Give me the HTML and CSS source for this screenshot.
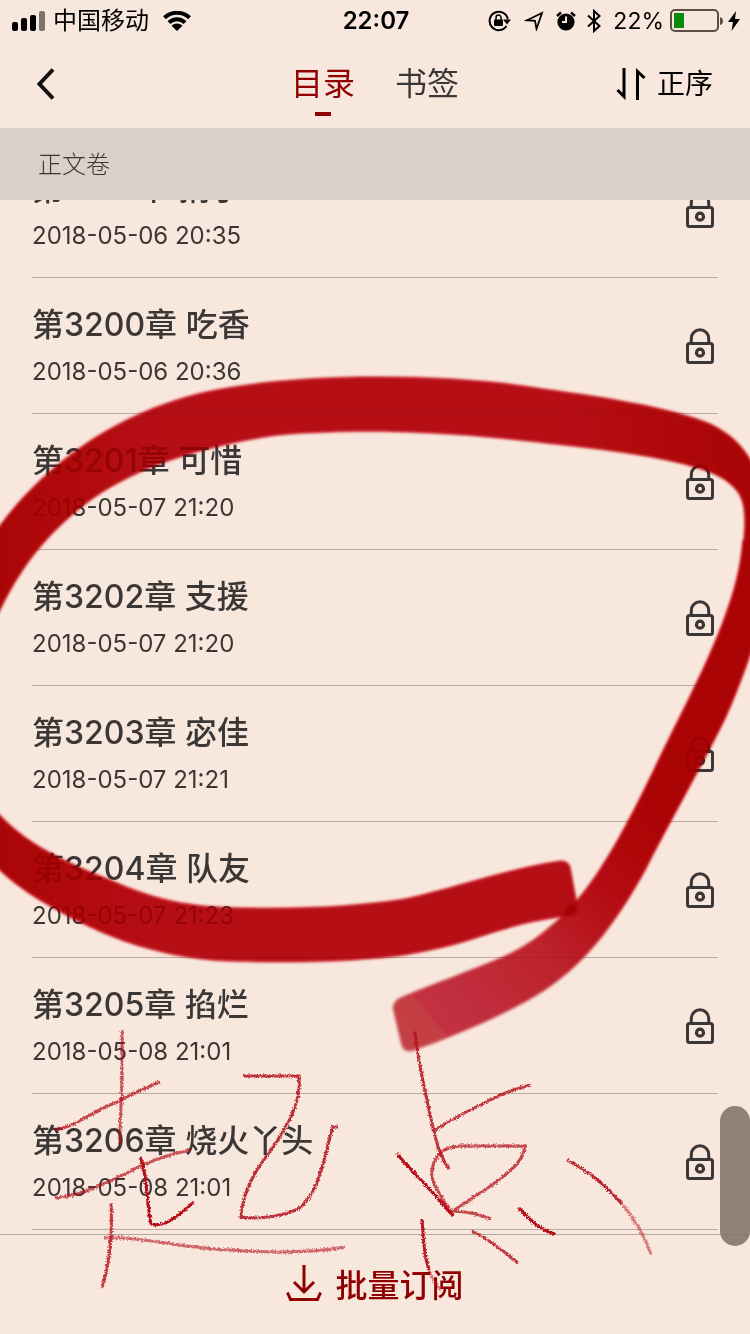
FILE: index.html
```html
<!DOCTYPE html>
<html lang="zh-CN">
<head>
    <meta charset="UTF-8">
    <meta name="viewport" content="width=device-width, initial-scale=1.0">
    <title>目录</title>
    <link rel="stylesheet" href="styles.css">
</head>
<body>
    <svg class="defs" aria-hidden="true">
        <symbol id="lock" viewBox="0 0 28 36">
            <path d="M5.3 15v-4.500a8.700 8.700 0 0 1 17.400 0V15" fill="none" stroke="currentColor" stroke-width="3"/>
            <rect x="1.500" y="15.500" width="25" height="19" rx="2" fill="none" stroke="currentColor" stroke-width="3"/>
            <circle cx="14" cy="24.700" r="3.500" fill="none" stroke="currentColor" stroke-width="3.200"/>
        </symbol>
    </svg>

    <div class="status">
        <div class="status-left">
            <svg width="34" height="20" viewBox="0 0 34 20">
                <rect x="0" y="11" width="6" height="9" rx="2"/>
                <rect x="9" y="7" width="6" height="13" rx="2"/>
                <rect x="18" y="4" width="6" height="16" rx="2"/>
                <rect x="27" y="0" width="6" height="20" rx="2" opacity="0.5"/>
            </svg>
            <span class="carrier">中国移动</span>
            <svg width="28" height="20" viewBox="0 0 28 20">
                <path d="M1.500 6.800a18 18 0 0 1 25 0M6 11.600a11.500 11.500 0 0 1 16 0" fill="none" stroke="#000" stroke-width="4"/>
                <path d="M14 20l-5.500-5.300a8 8 0 0 1 11 0z"/>
            </svg>
        </div>
        <span class="time">22:07</span>
        <div class="status-right">
            <svg width="24" height="22" viewBox="0 0 24 22">
                <path d="M18.500 16a9.200 9.200 0 1 1 1.300-7" fill="none" stroke="#000" stroke-width="2"/>
                <path d="M15 9.500h8l-4 5z"/>
                <rect x="6" y="9.500" width="9" height="6.500" rx="1"/>
                <path d="M8 10V7.500a2.500 2.500 0 0 1 5 0V10" fill="none" stroke="#000" stroke-width="1.500"/>
            </svg>
            <svg class="location" width="20" height="20" viewBox="0 0 20 20">
                <path d="M18 2L3 9.200l8 .600 1.500 8z" fill="none" stroke="#000" stroke-width="1.800"/>
            </svg>
            <svg class="alarm" width="20" height="20" viewBox="0 0 20 20">
                <circle cx="10" cy="11" r="8.600"/>
                <path d="M1 5l4-3.500M19 5l-4-3.500" stroke="#000" stroke-width="2.500"/>
                <path d="M10 5.500V11H6" fill="none" stroke="#f8e7dc" stroke-width="2"/>
            </svg>
            <svg class="bluetooth" width="14" height="24" viewBox="0 0 14 24">
                <path d="M1 6.500l11.500 10.500L7 22V2l5.500 5L1 17.500" fill="none" stroke="#000" stroke-width="2"/>
            </svg>
            <span class="percent">22%</span>
            <svg width="54" height="24" viewBox="0 0 54 24">
                <rect x="1" y="1" width="47" height="21" rx="4" fill="none" stroke="#5c4c46" stroke-width="2"/>
                <path d="M50 8q3 1 3 4t-3 4z" fill="#5c4c46"/>
                <rect x="4" y="4" width="10" height="15" fill="#0a8a0a"/>
            </svg>
            <svg class="bolt" width="12" height="20" viewBox="0 0 12 20">
                <path d="M8 0L0 11h5L3.500 20 12 8H7z"/>
            </svg>
        </div>
    </div>

    <header class="nav">
        <button class="back" aria-label="返回">
            <svg width="18" height="32" viewBox="0 0 18 32">
                <path d="M16 1.500L2.500 16 16 30.500" fill="none" stroke="#111" stroke-width="4"/>
            </svg>
        </button>
        <div class="tabs">
            <button class="tab active">目录</button>
            <button class="tab">书签</button>
        </div>
        <button class="sort">
            <svg width="30" height="32" viewBox="0 0 30 32">
                <path d="M8 0v28.500L1.500 22M21.500 32V3.500L28.500 10" fill="none" stroke="#000" stroke-width="3"/>
            </svg>
            正序
        </button>
    </header>

    <h2 class="volume">正文卷</h2>

    <ul class="chapters">
        <li><a href="#"><span class="info"><span class="title">第3199章 捎了</span><span class="date">2018-05-06 20:35</span></span><svg class="lock"><use href="#lock"/></svg></a></li>
        <li><a href="#"><span class="info"><span class="title">第3200章 吃香</span><span class="date">2018-05-06 20:36</span></span><svg class="lock"><use href="#lock"/></svg></a></li>
        <li><a href="#"><span class="info"><span class="title">第3201章 可惜</span><span class="date">2018-05-07 21:20</span></span><svg class="lock"><use href="#lock"/></svg></a></li>
        <li><a href="#"><span class="info"><span class="title">第3202章 支援</span><span class="date">2018-05-07 21:20</span></span><svg class="lock"><use href="#lock"/></svg></a></li>
        <li><a href="#"><span class="info"><span class="title">第3203章 宓佳</span><span class="date">2018-05-07 21:21</span></span><svg class="lock"><use href="#lock"/></svg></a></li>
        <li><a href="#"><span class="info"><span class="title">第3204章 队友</span><span class="date">2018-05-07 21:23</span></span><svg class="lock"><use href="#lock"/></svg></a></li>
        <li><a href="#"><span class="info"><span class="title">第3205章 掐烂</span><span class="date">2018-05-08 21:01</span></span><svg class="lock"><use href="#lock"/></svg></a></li>
        <li><a href="#"><span class="info"><span class="title">第3206章 烧火丫头</span><span class="date">2018-05-08 21:01</span></span><svg class="lock"><use href="#lock"/></svg></a></li>
    </ul>

    <footer class="footer">
        <button class="subscribe">
            <svg width="36" height="36" viewBox="0 0 36 36">
                <path d="M18 0v27M8 17l10 10 10-10M1.500 27.500l3 7h27l3-7" fill="none" stroke="#900000" stroke-width="3"/>
            </svg>
            批量订阅
        </button>
    </footer>

    <div class="thumb"></div>

    <!-- marker: a translucent coat, then a second coat that darkens what lies below -->
    <svg class="marks" viewBox="0 0 750 1334" preserveAspectRatio="none" aria-hidden="true">
        <defs>
            <linearGradient id="loop" gradientUnits="userSpaceOnUse" x1="0" y1="0" x2="750" y2="0">
                <stop offset="0" stop-color="#b00000" stop-opacity="0.92"/>
                <stop offset="0.2" stop-color="#b4000a" stop-opacity="0.8"/>
                <stop offset="0.75" stop-color="#b4000a" stop-opacity="0.8"/>
                <stop offset="0.98" stop-color="#b00000" stop-opacity="0.93"/>
            </linearGradient>
            <linearGradient id="tail" gradientUnits="userSpaceOnUse" x1="660" y1="800" x2="400" y2="1030">
                <stop offset="0" stop-color="#b00000" stop-opacity="0.93"/>
                <stop offset="0.25" stop-color="#b4000a" stop-opacity="0.85"/>
                <stop offset="0.5" stop-color="#b80010" stop-opacity="0.8"/>
                <stop offset="1" stop-color="#b80a1c" stop-opacity="0.76"/>
            </linearGradient>
            <linearGradient id="tail-shade" gradientUnits="userSpaceOnUse" x1="660" y1="800" x2="400" y2="1030">
                <stop offset="0" stop-color="#f0304a"/>
                <stop offset="0.25" stop-color="#f04058"/>
                <stop offset="0.55" stop-color="#f4c0c8"/>
                <stop offset="1" stop-color="#fcf4f4"/>
            </linearGradient>
            <path id="loop-top" d="M-10 540C30 480 95 425 180 399C270 371 440 373 530 387C600 397 670 407 710 424C735 436 748 452 760 478V540H744C746 515 745 502 738 492C728 478 712 472 695 467C640 451 560 445 500 438C420 430 330 429 270 436C190 449 130 470 85 504C45 535 15 572 -10 632z"/>
            <path id="loop-tail" d="M760 540H743C741 570 733 595 725 617C708 665 675 725 654 770C630 820 605 866 583 893C560 922 530 945 505 956C470 971 435 983 402 997Q392 1001 393 1009L401 1043Q403 1053 412 1051C450 1038 510 1013 545 990C590 960 620 915 645 870C668 825 696 775 713 742C733 705 745 670 760 625z"/>
            <path id="loop-bottom" d="M-10 804C20 842 60 860 110 880C160 903 200 908 250 908C310 909 360 906 405 899C460 887 510 868 561 861Q568 861 570 867L577 905Q577 914 568 916C510 922 480 940 430 950C380 962 290 963 230 961C150 958 90 930 40 900Q10 882 -10 860z"/>
            <filter id="soft"><feGaussianBlur stdDeviation="1.500"/></filter>
        </defs>
        <g filter="url(#soft)">
            <use href="#loop-top" fill="url(#loop)"/>
            <use href="#loop-tail" fill="url(#tail)"/>
            <use href="#loop-bottom" fill="url(#loop)"/>
        </g>
    </svg>
    <svg class="marks shade" viewBox="0 0 750 1334" preserveAspectRatio="none" aria-hidden="true">
        <g filter="url(#soft)">
            <use href="#loop-top" fill="#f0485e"/>
            <use href="#loop-tail" fill="url(#tail-shade)"/>
            <use href="#loop-bottom" fill="#f0485e"/>
            <ellipse fill="#e01020" cx="571" cy="910" rx="7" ry="6"/>
        </g>
    </svg>

    <!-- pencil -->
    <svg class="marks" viewBox="0 0 750 1334" preserveAspectRatio="none" aria-hidden="true">
        <defs>
            <filter id="rough" filterUnits="userSpaceOnUse" x="0" y="1000" width="750" height="334">
                <feTurbulence type="fractalNoise" baseFrequency="0.6" numOctaves="2" result="n"/>
                <feDisplacementMap in="SourceGraphic" in2="n" scale="4" xChannelSelector="R" yChannelSelector="G"/>
            </filter>
        </defs>
        <g class="pencil" filter="url(#rough)">
            <path d="M122 1030V1070C122 1100 120 1110 120 1144" opacity="0.7"/>
            <path d="M55 1130C80 1125 90 1112 115 1103Q140 1090 160 1082" opacity="0.75"/>
            <path d="M55 1198C85 1195 100 1185 125 1174Q155 1157 190 1150" opacity="0.7"/>
            <path d="M140 1157C147 1170 146 1200 151 1224C165 1228 175 1218 194 1202"/>
            <path d="M111 1203C113 1240 109 1265 102 1288" opacity="0.8"/>
            <path d="M104 1238C145 1236 175 1248 230 1250Q300 1255 345 1247" opacity="0.6"/>
            <path d="M244 1076H299C302 1105 285 1130 268 1154C248 1180 242 1200 241 1217C260 1220 290 1215 301 1207C322 1187 325 1150 333 1127H338" opacity="0.85"/>
            <path d="M415 1032C418 1065 429 1110 436 1140Q441 1158 449 1169" opacity="0.85"/>
            <path d="M435 1130C455 1117 480 1105 500 1095Q515 1089 530 1085" opacity="0.8"/>
            <path d="M397 1154C415 1175 435 1193 453 1216"/>
            <path d="M453 1216C442 1195 430 1185 432 1170C435 1153 445 1147 460 1146H525C522 1165 508 1172 495 1183L453 1211Q475 1212 491 1219" opacity="0.75"/>
            <path d="M422 1219C424 1245 424 1255 429 1270" opacity="0.95"/>
            <path d="M429 1270Q433 1282 441 1290" opacity="0.5"/>
            <path d="M472 1231C490 1240 505 1252 518 1263" opacity="0.8"/>
            <path d="M519 1208C530 1220 540 1230 555 1234"/>
            <path d="M567 1160C590 1172 605 1185 622 1204" opacity="0.9"/>
            <path d="M622 1204Q640 1225 651 1254" opacity="0.5"/>
        </g>
    </svg>
</body>
</html>
```
FILE: styles.css
```css
* {
    box-sizing: border-box;
}

body {
    position: relative;
    display: flex;
    flex-direction: column;
    height: 100vh;
    margin: 0;
    overflow: hidden;
    background-color: #f8e7dc;
    color: #3b3737;
    font-family: Inter, "Noto Sans CJK SC", sans-serif;
}

button {
    padding: 0;
    border: none;
    background: none;
    color: inherit;
    font-family: inherit;
    cursor: pointer;
}

svg {
    display: block;
    flex-shrink: 0;
}

.defs {
    position: absolute;
    width: 0;
    height: 0;
}

/* status bar */
.status {
    display: grid;
    grid-template-columns: 1fr auto 1fr;
    align-items: center;
    height: 40px;
    padding: 0 10px 0 12px;
    color: #000;
    font-size: 24px;
    line-height: 42px;
}

.status-left,
.status-right {
    display: flex;
    align-items: center;
}

.status-right {
    justify-content: flex-end;
}

.carrier {
    margin: 0 14px 0 7px;
}

.time {
    font-size: 24px;
    font-weight: 600;
}

.location {
    margin-left: 12px;
}

.alarm {
    margin-left: 12px;
}

.bluetooth {
    margin: 0 12px 0 11px;
}

.percent {
    margin-right: 6px;
    font-size: 23px;
}

.bolt {
    margin-left: 4px;
}

/* navigation */
.nav {
    display: grid;
    grid-template-columns: 1fr auto 1fr;
    align-items: center;
    height: 88px;
    padding: 0 37px;
}

.back {
    justify-self: start;
}

.tabs {
    display: flex;
    gap: 40px;
}

.tab {
    position: relative;
    height: 64px;
    font-size: 32px;
    line-height: 64px;
}

.tab.active {
    color: #900000;
}

.tab.active::after {
    content: "";
    position: absolute;
    bottom: 0;
    left: 50%;
    width: 16px;
    height: 4px;
    margin-left: -8px;
    background-color: #900000;
}

.sort {
    display: flex;
    align-items: center;
    justify-self: end;
    gap: 11px;
    color: #000;
    font-size: 28px;
    line-height: 40px;
}

.volume {
    height: 72px;
    margin: 0;
    padding-left: 38px;
    background-color: #d9d0ca;
    color: #3b3535;
    font-size: 24px;
    font-weight: 300;
    line-height: 74px;
}

/* chapter list, latest chapters at the bottom */
.chapters {
    display: flex;
    flex: 1;
    flex-direction: column;
    justify-content: flex-end;
    min-height: 0;
    margin: 0;
    padding: 0 32px 4px;
    overflow: hidden;
    list-style: none;
}

.chapters li {
    flex-shrink: 0;
    border-bottom: 1px solid #b9aba4;
}

.chapters a {
    display: flex;
    align-items: center;
    justify-content: space-between;
    padding: 25px 4px 24px 0;
    color: inherit;
    text-decoration: none;
}

.info {
    display: flex;
    flex-direction: column;
    gap: 8px;
}

.title {
    font-size: 32px;
    font-weight: 500;
    line-height: 44px;
}

.date {
    font-size: 24px;
    line-height: 34px;
}

.lock {
    width: 28px;
    height: 36px;
}

.footer {
    display: flex;
    justify-content: center;
    height: 100px;
    border-top: 1px solid #b3a7a1;
}

.subscribe {
    display: flex;
    align-items: center;
    gap: 13px;
    padding-bottom: 4px;
    color: #900000;
    font-size: 32px;
    font-weight: 500;
}

.thumb {
    position: absolute;
    right: 0;
    bottom: 88px;
    width: 30px;
    height: 140px;
    border-radius: 15px;
    background-color: rgba(128, 116, 104, 0.88);
}

.marks {
    position: absolute;
    top: 0;
    left: 0;
    width: 100%;
    height: 100%;
    pointer-events: none;
}

.shade {
    mix-blend-mode: multiply;
}

.pencil path {
    fill: none;
    stroke: #b4101c;
    stroke-width: 3;
}
```
